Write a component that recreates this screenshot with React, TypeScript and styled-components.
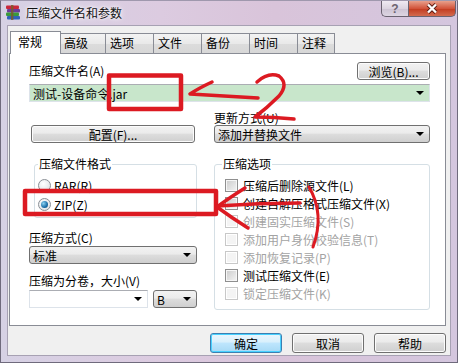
import React, { FC } from "react";
import styled, { createGlobalStyle, css } from "styled-components";

const GlobalStyle = createGlobalStyle`
  html, body {
    margin: 0;
    padding: 0;
    background: #ffffff;
  }
  body {
    font-family: "Noto Sans CJK SC", "Liberation Sans", sans-serif;
    font-size: 12px;
    color: #000;
  }
`;

const Window = styled.div`
  position: relative;
  width: 458px;
  height: 363px;
  box-sizing: border-box;
  display: flex;
  flex-direction: column;
  background: linear-gradient(90deg, #d6d1e4 0%, #dccbe0 35%, #d9c4da 60%, #d4c6de 100%);
  border: 1px solid #6f6a7c;
  border-top-color: #9f98ad;
  overflow: hidden;
`;

const TitleBar = styled.div`
  height: 24px;
  display: flex;
  align-items: flex-start;
  padding-left: 4px;
  flex-shrink: 0;
`;

const Title = styled.div`
  margin-top: 5px;
  margin-left: 4px;
  font-size: 12px;
  line-height: 14px;
  color: #111;
  text-shadow: 0 0 6px #fff, 0 0 3px #fff;
`;

const Caption = styled.div`
  margin-left: auto;
  margin-right: 1px;
  display: flex;
`;

const CaptionButton = styled.div<{ $close?: boolean }>`
  height: 16px;
  display: flex;
  align-items: center;
  justify-content: center;
  box-sizing: border-box;
  border: 1px solid #6a6270;
  border-top: none;
  ${(p) =>
    p.$close
      ? css`
          width: 48px;
          border-radius: 0 0 5px 0;
          background: linear-gradient(#e8a08c, #d2533a 50%, #c23a1f 51%, #d36a4e);
        `
      : css`
          width: 27px;
          border-right: none;
          border-radius: 0 0 0 5px;
          background: linear-gradient(#f0eaf2, #dcd4e0 50%, #cdc3d3 51%, #ddd5e2);
          color: #6d6470;
          font-family: "Liberation Sans", sans-serif;
          font-weight: bold;
          font-size: 12px;
        `}
`;

const Client = styled.div`
  flex: 1;
  margin: 0 6px 6px 6px;
  background: #f0f0f0;
  border: 1px solid #a7a1b3;
  display: flex;
  flex-direction: column;
  padding: 5px 4px 0 1px;
`;

const TabStrip = styled.div`
  display: flex;
  align-items: flex-end;
  height: 22px;
  padding-left: 1px;
  position: relative;
  z-index: 1;
`;

const Tab = styled.div<{ $active?: boolean; $w: number }>`
  box-sizing: border-box;
  width: ${(p) => p.$w}px;
  border: 1px solid #898c95;
  border-left-width: ${(p) => (p.$active ? 1 : 0)}px;
  border-bottom: none;
  padding-left: ${(p) => (p.$active ? 7 : 4)}px;
  line-height: 18px;
  height: 20px;
  background: linear-gradient(#f3f3f3, #e9e9e9 50%, #dcdcdc 51%, #d7d7d7);
  ${(p) =>
    p.$active &&
    css`
      height: 23px;
      margin-bottom: -1px;
      line-height: 20px;
      background: #ffffff;
      border-right-width: 1px;
      margin-right: -1px;
      position: relative;
      z-index: 2;
    `}
`;

const Panel = styled.div`
  height: 273px;
  box-sizing: border-box;
  background: #ffffff;
  border: 1px solid #898c95;
  padding: 8px 15px 0 19px;
  display: flex;
  flex-direction: column;
`;

const NameRow = styled.div`
  display: flex;
  align-items: center;
  justify-content: space-between;
  height: 18px;
`;

const Label = styled.div<{ $gap?: number }>`
  line-height: 14px;
  height: 14px;
  white-space: nowrap;
  margin-top: ${(p) => p.$gap ?? 0}px;
`;

const Button = styled.div<{ $w?: number; $default?: boolean }>`
  box-sizing: border-box;
  width: ${(p) => (p.$w ? `${p.$w}px` : "auto")};
  height: 18px;
  border: 1px solid #707070;
  border-radius: 3px;
  background: linear-gradient(#f2f2f2, #ebebeb 45%, #dddddd 50%, #cfcfcf);
  box-shadow: inset 0 0 0 1px #fcfcfc;
  display: flex;
  align-items: center;
  justify-content: center;
  white-space: nowrap;
  ${(p) =>
    p.$default &&
    css`
      border-color: #3c7fb1;
      box-shadow: inset 0 0 0 1px #48d1ff;
      background: linear-gradient(#eaf6fd, #d9f0fc 45%, #bee6fd 50%, #a7d9f5);
    `}
`;

const Combo = styled.div<{ $w?: number; $kind: "edit" | "list"; $fill?: string }>`
  box-sizing: border-box;
  width: ${(p) => (p.$w ? `${p.$w}px` : "auto")};
  height: 18px;
  display: flex;
  align-items: center;
  padding-left: 3px;
  white-space: nowrap;
  ${(p) =>
    p.$kind === "edit"
      ? css`
          border: 1px solid #dde3ea;
          border-top-color: #abadb3;
          background: ${p.$fill ?? "#ffffff"};
        `
      : css`
          border: 1px solid #707070;
          border-radius: 3px;
          background: linear-gradient(#f2f2f2, #ebebeb 45%, #dddddd 50%, #cfcfcf);
        `}
`;

const ComboText = styled.span`
  flex: 1;
  overflow: hidden;
`;

const Arrow = styled.span`
  width: 0;
  height: 0;
  margin: 0 5px 0 4px;
  border-left: 4px solid transparent;
  border-right: 4px solid transparent;
  border-top: 4px solid #000;
`;

const Columns = styled.div`
  display: flex;
  gap: 17px;
  margin-top: 9px;
`;

const Column = styled.div<{ $w: number }>`
  width: ${(p) => p.$w}px;
  display: flex;
  flex-direction: column;
`;

const Group = styled.fieldset<{ $indent: number; $pb: number }>`
  margin: 15px 0 0 ${(p) => p.$indent}px;
  padding: 0 0 ${(p) => p.$pb}px ${(p) => (p.$indent > 0 ? 3 : 7)}px;
  border: 1px solid #d5dfe5;
  border-radius: 3px;
  min-width: 0;
  display: flex;
  flex-direction: column;
`;

const Legend = styled.legend`
  padding: 0 1px;
  line-height: 12px;
  height: 12px;
`;

const Option = styled.div<{ $disabled?: boolean; $gap: number }>`
  display: flex;
  align-items: center;
  height: 13px;
  margin-top: ${(p) => p.$gap}px;
  gap: 3px;
  white-space: nowrap;
  color: ${(p) => (p.$disabled ? "#a3a3a3" : "#000")};
`;

const Radio = styled.span<{ $on?: boolean }>`
  box-sizing: border-box;
  width: 13px;
  height: 13px;
  border-radius: 50%;
  border: 1px solid #8a8f96;
  background: radial-gradient(circle at 40% 35%, #ffffff, #d8dbde);
  display: flex;
  align-items: center;
  justify-content: center;
  &::after {
    content: "";
    display: ${(p) => (p.$on ? "block" : "none")};
    width: 7px;
    height: 7px;
    border-radius: 50%;
    background: radial-gradient(circle at 35% 35%, #8cd2f0, #1b6ea8 60%, #0d4b78);
  }
`;

const Check = styled.span<{ $disabled?: boolean }>`
  box-sizing: border-box;
  width: 13px;
  height: 13px;
  border: 1px solid ${(p) => (p.$disabled ? "#c8c8c8" : "#8f8f8f")};
  background: ${(p) =>
    p.$disabled ? "#f4f4f4" : "linear-gradient(135deg, #cbcbcb, #f4f4f4)"};
  box-shadow: inset 0 0 0 1px ${(p) => (p.$disabled ? "#ffffff" : "#f6f6f6")};
  margin-right: 2px;
`;

const SizeRow = styled.div`
  display: flex;
  gap: 5px;
  margin-top: 2px;
`;

const Footer = styled.div`
  display: flex;
  justify-content: flex-end;
  gap: 10px;
  padding-top: 7px;
`;

const Overlay = styled.svg`
  position: absolute;
  left: -1px;
  top: -1px;
  pointer-events: none;
`;

const RarIcon: FC = () => (
  <svg width="17" height="17" viewBox="0 0 17 17" style={{ marginTop: 3 }}>
    <rect x="1" y="1.5" width="13" height="3.4" rx="1" fill="#c9283c" />
    <rect x="2" y="5" width="13" height="3.4" rx="1" fill="#6a3d9a" />
    <rect x="1" y="8.5" width="13" height="3.4" rx="1" fill="#3a9a3a" />
    <rect x="2" y="12" width="13" height="3.4" rx="1" fill="#2f63b8" />
    <rect x="6" y="1" width="2.4" height="15" fill="#7a5a2a" opacity="0.85" />
  </svg>
);

const App: FC = () => {
  const tabs: [string, number][] = [
    ["常规", 51],
    ["高级", 46],
    ["选项", 48],
    ["文件", 48],
    ["备份", 48],
    ["时间", 48],
    ["注释", 37],
  ];

  const options: [string, boolean][] = [
    ["压缩后删除源文件(L)", false],
    ["创建自解压格式压缩文件(X)", false],
    ["创建固实压缩文件(S)", true],
    ["添加用户身份校验信息(T)", true],
    ["添加恢复记录(P)", true],
    ["测试压缩文件(E)", false],
    ["锁定压缩文件(K)", true],
  ];

  return (
    <>
      <GlobalStyle />
      <Window>
        <TitleBar>
          <RarIcon />
          <Title>压缩文件名和参数</Title>
          <Caption>
            <CaptionButton>?</CaptionButton>
            <CaptionButton $close>
              <svg width="14" height="11" viewBox="0 0 14 11">
                <path d="M3 1.5 L11 9.5 M11 1.5 L3 9.5" stroke="#5a1a10" strokeWidth="4" />
                <path d="M3 1.5 L11 9.5 M11 1.5 L3 9.5" stroke="#ffffff" strokeWidth="2.4" />
              </svg>
            </CaptionButton>
          </Caption>
        </TitleBar>

        <Client>
          <TabStrip>
            {tabs.map(([t, w], i) => (
              <Tab key={t} $w={w} $active={i === 0}>
                {t}
              </Tab>
            ))}
          </TabStrip>

          <Panel>
            <NameRow>
              <Label>压缩文件名(A)</Label>
              <Button $w={73}>浏览(B)...</Button>
            </NameRow>
            <Combo $kind="edit" $fill="#c8e6cb" style={{ marginTop: 4 }}>
              <ComboText>测试-设备命令.jar</ComboText>
              <Arrow />
            </Combo>

            <Columns>
              <Column $w={168}>
                <Button $w={164} style={{ marginTop: 14, marginLeft: 2 }}>
                  配置(F)...
                </Button>
                <Group $indent={5} $pb={6}>
                  <Legend>压缩文件格式</Legend>
                  <Option $gap={9}>
                    <Radio />
                    RAR(R)
                  </Option>
                  <Option $gap={6}>
                    <Radio $on />
                    ZIP(Z)
                  </Option>
                </Group>
                <Label $gap={13}>压缩方式(C)</Label>
                <Combo $kind="list" $w={168} style={{ marginTop: 1 }}>
                  <ComboText>标准</ComboText>
                  <Arrow />
                </Combo>
                <Label $gap={10}>压缩为分卷，大小(V)</Label>
                <SizeRow>
                  <Combo $kind="edit" $w={119}>
                    <ComboText />
                    <Arrow />
                  </Combo>
                  <Combo $kind="list" $w={44}>
                    <ComboText>B</ComboText>
                    <Arrow />
                  </Combo>
                </SizeRow>
              </Column>

              <Column $w={219}>
                <Label>更新方式(U)</Label>
                <Combo $kind="list">
                  <ComboText>添加并替换文件</ComboText>
                  <Arrow />
                </Combo>
                <Group $indent={0} $pb={9}>
                  <Legend>压缩选项</Legend>
                  {options.map(([t, d], i) => (
                    <Option key={t} $disabled={d} $gap={i === 0 ? 9 : 5} style={{ marginLeft: 3 }}>
                      <Check $disabled={d} />
                      {t}
                    </Option>
                  ))}
                </Group>
              </Column>
            </Columns>
          </Panel>

          <Footer>
            <Button $w={72} $default style={{ height: 20 }}>
              确定
            </Button>
            <Button $w={72} style={{ height: 20 }}>
              取消
            </Button>
            <Button $w={72} style={{ height: 20 }}>
              帮助
            </Button>
          </Footer>
        </Client>

        <Overlay width="458" height="363" viewBox="0 0 458 363">
          <g fill="none" stroke="#dc1a22" strokeLinecap="round" strokeLinejoin="round">
            <rect x="109" y="75.5" width="72" height="33.5" strokeWidth="4.5" />
            <rect x="25" y="191" width="191" height="23" strokeWidth="4.5" />
            <path d="M212 82 Q199 88 190 94 Q222 96 258 98" strokeWidth="3.5" />
            <path d="M257 82 Q268 72 279 76 Q289 84 279 96 Q267 108 255 117 Q274 117 294 119" strokeWidth="3.5" />
            <path d="M245 188 Q229 198 217 207 Q232 218 248 228" strokeWidth="3.5" />
            <path d="M217 206 Q258 203 300 203" strokeWidth="3.5" />
            <path d="M309 187 Q325 214 313 247" strokeWidth="3" />
          </g>
        </Overlay>
      </Window>
    </>
  );
};

export default App;
